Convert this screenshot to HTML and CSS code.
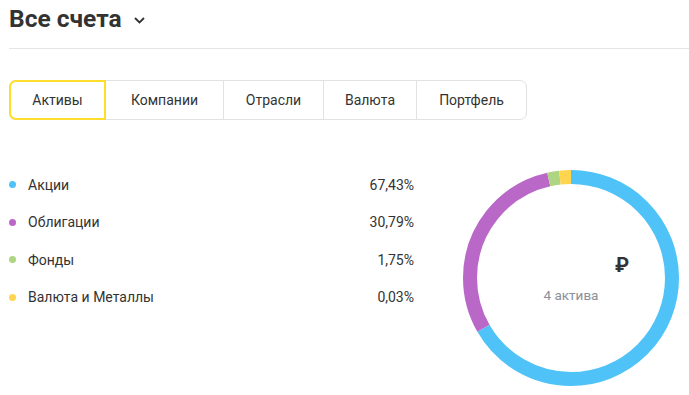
FILE: index.html
```html
<!DOCTYPE html>
<html lang="ru">
<head>
<meta charset="utf-8">
<link rel="stylesheet" href="styles.css">
</head>
<body>
<div class="page">
  <header class="header">
    <h1 class="title">Все счета</h1>
    <svg class="chevron" width="11" height="7" viewBox="0 0 11 7"><path d="M1 1l4.5 4.5L10 1" fill="none" stroke="#333" stroke-width="1.8"/></svg>
  </header>
  <nav class="tabs">
    <div class="tab active">Активы</div>
    <div class="tab">Компании</div>
    <div class="tab">Отрасли</div>
    <div class="tab">Валюта</div>
    <div class="tab">Портфель</div>
  </nav>
  <section class="content">
    <ul class="legend">
      <li class="row"><span class="dot blue"></span><span class="label">Акции</span><span class="pct">67,43%</span></li>
      <li class="row"><span class="dot purple"></span><span class="label">Облигации</span><span class="pct">30,79%</span></li>
      <li class="row"><span class="dot green"></span><span class="label">Фонды</span><span class="pct">1,75%</span></li>
      <li class="row"><span class="dot yellow"></span><span class="label">Валюта и Металлы</span><span class="pct">0,03%</span></li>
    </ul>
    <div class="donut">
      <svg width="216" height="216" viewBox="0 0 216 216">
        <g transform="rotate(-90 108 108)" fill="none" stroke-width="14">
          <circle cx="108" cy="108" r="101" stroke="#4FC3F7" stroke-dasharray="422.5 300" stroke-dashoffset="0"/>
          <circle cx="108" cy="108" r="101" stroke="#BA68C8" stroke-dasharray="188.6 700" stroke-dashoffset="-422.5"/>
          <circle cx="108" cy="108" r="101" stroke="#AED581" stroke-dasharray="11.2 700" stroke-dashoffset="-611.1"/>
          <circle cx="108" cy="108" r="101" stroke="#FFD54F" stroke-dasharray="12.4 700" stroke-dashoffset="-622.3"/>
        </g>
      </svg>
      <span class="rub">₽</span>
      <span class="count">4 актива</span>
    </div>
  </section>
</div>
</body>
</html>
```
FILE: styles.css
```css
* { box-sizing: border-box; }
html, body { margin: 0; padding: 0; background: #fff; }
body { font-family: Roboto, "Noto Sans", sans-serif; color: #333; }
.page { padding: 0 10px 0 9px; width: 689px; }
.header {
  display: flex;
  align-items: center;
  gap: 12px;
  height: 49px;
  border-bottom: 1px solid #e5e5e5;
  margin-right: -10px;
  padding-bottom: 11px;
}
.title { margin: 0; font-size: 24.5px; font-weight: 700; color: #333; line-height: 28px; }
.chevron { margin-top: 3px; }
.tabs {
  display: flex;
  width: 518px;
  height: 40px;
  margin-top: 31px;
  border: 1px solid #e2e2e2;
  border-radius: 7px;
}
.tab {
  display: flex;
  align-items: center;
  justify-content: center;
  font-size: 14px;
  color: #333;
  border-left: 1px solid #e2e2e2;
}
.tab:nth-child(1) { width: 96px; border-left: none; }
.tab:nth-child(2) { width: 117px; }
.tab:nth-child(3) { width: 100px; }
.tab:nth-child(4) { width: 93px; }
.tab:nth-child(5) { flex: 1; }
.tab.active {
  border: 2px solid #FFDD2D;
  border-radius: 7px 0 0 7px;
  margin: -1px 0 -1px -1px;
  width: 97px;
}
.tab.active + .tab { border-left: none; }
.content {
  display: flex;
  align-items: flex-start;
  gap: 49px;
  margin-top: 46px;
}
.legend { list-style: none; margin: 0; padding: 0; width: 405px; }
.row {
  display: flex;
  align-items: center;
  height: 37.5px;
  font-size: 14px;
}
.dot { width: 7px; height: 7px; border-radius: 50%; margin-left: 0; margin-right: 12px; }
.blue { background: #4FC3F7; }
.purple { background: #BA68C8; }
.green { background: #AED581; }
.yellow { background: #FFD54F; }
.label { flex: 1; }
.pct { text-align: right; }
.donut { position: relative; width: 216px; height: 216px; margin-top: 4px; }
.donut svg { display: block; }
.rub {
  position: absolute;
  left: 152px;
  top: 83px;
  font-size: 20px;
  font-weight: 700;
  color: #333;
}
.count {
  position: absolute;
  left: 0;
  right: 0;
  top: 117px;
  text-align: center;
  font-size: 13.5px;
  color: #8a8f99;
}
```
